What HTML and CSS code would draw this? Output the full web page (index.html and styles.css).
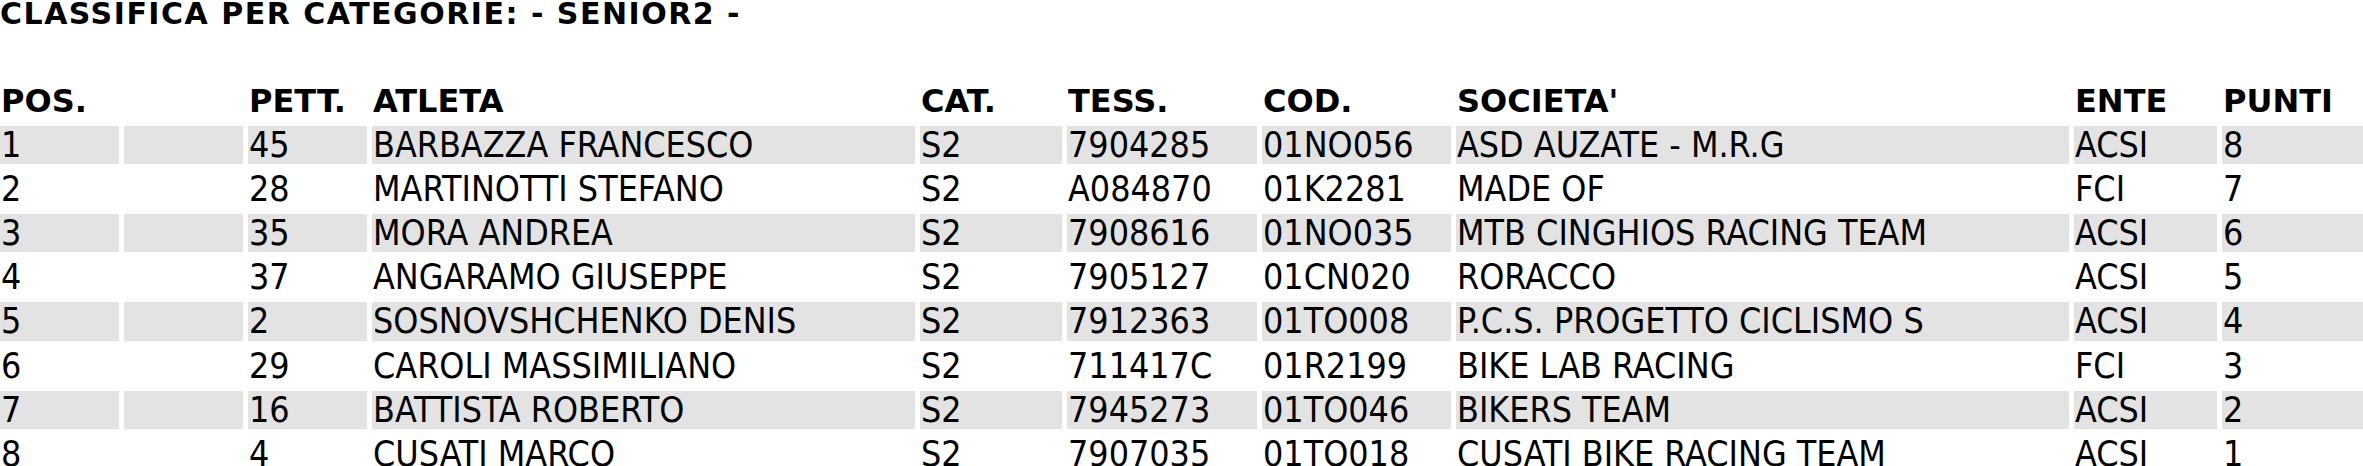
FILE: index.html
```html
<!DOCTYPE html>
<html lang="it">
<head>
<meta charset="utf-8">
<title>Classifica per categorie - SENIOR2</title>
<link rel="stylesheet" href="styles.css">
</head>
<body>
<div class="title">CLASSIFICA PER CATEGORIE: - SENIOR2 -</div>
<div class="table">
  <div class="th">POS.</div><div class="th"></div><div class="th">PETT.</div><div class="th">ATLETA</div><div class="th">CAT.</div><div class="th">TESS.</div><div class="th">COD.</div><div class="th">SOCIETA'</div><div class="th">ENTE</div><div class="th">PUNTI</div>

  <div class="td g">1</div><div class="td g"></div><div class="td g">45</div><div class="td g">BARBAZZA FRANCESCO</div><div class="td g">S2</div><div class="td g">7904285</div><div class="td g">01NO056</div><div class="td g">ASD AUZATE - M.R.G</div><div class="td g">ACSI</div><div class="td g">8</div>

  <div class="td">2</div><div class="td"></div><div class="td">28</div><div class="td">MARTINOTTI STEFANO</div><div class="td">S2</div><div class="td">A084870</div><div class="td">01K2281</div><div class="td">MADE OF</div><div class="td">FCI</div><div class="td">7</div>

  <div class="td g">3</div><div class="td g"></div><div class="td g">35</div><div class="td g">MORA ANDREA</div><div class="td g">S2</div><div class="td g">7908616</div><div class="td g">01NO035</div><div class="td g">MTB CINGHIOS RACING TEAM</div><div class="td g">ACSI</div><div class="td g">6</div>

  <div class="td">4</div><div class="td"></div><div class="td">37</div><div class="td">ANGARAMO GIUSEPPE</div><div class="td">S2</div><div class="td">7905127</div><div class="td">01CN020</div><div class="td">RORACCO</div><div class="td">ACSI</div><div class="td">5</div>

  <div class="td g">5</div><div class="td g"></div><div class="td g">2</div><div class="td g">SOSNOVSHCHENKO DENIS</div><div class="td g">S2</div><div class="td g">7912363</div><div class="td g">01TO008</div><div class="td g">P.C.S. PROGETTO CICLISMO S</div><div class="td g">ACSI</div><div class="td g">4</div>

  <div class="td">6</div><div class="td"></div><div class="td">29</div><div class="td">CAROLI MASSIMILIANO</div><div class="td">S2</div><div class="td">711417C</div><div class="td">01R2199</div><div class="td">BIKE LAB RACING</div><div class="td">FCI</div><div class="td">3</div>

  <div class="td g">7</div><div class="td g"></div><div class="td g">16</div><div class="td g">BATTISTA ROBERTO</div><div class="td g">S2</div><div class="td g">7945273</div><div class="td g">01TO046</div><div class="td g">BIKERS TEAM</div><div class="td g">ACSI</div><div class="td g">2</div>

  <div class="td">8</div><div class="td"></div><div class="td">4</div><div class="td">CUSATI MARCO</div><div class="td">S2</div><div class="td">7907035</div><div class="td">01TO018</div><div class="td">CUSATI BIKE RACING TEAM</div><div class="td">ACSI</div><div class="td">1</div>
</div>
</body>
</html>
```
FILE: styles.css
```css
html, body {
  margin: 0;
  padding: 0;
  background: #ffffff;
  color: #000000;
  font-family: "DejaVu Sans", "Liberation Sans", sans-serif;
}

.title {
  font-size: 30px;
  font-weight: bold;
  letter-spacing: 1.5px;
  line-height: 28px;
  height: 28px;
  margin-bottom: 53.5px;
  white-space: nowrap;
}

.table {
  display: grid;
  grid-template-columns: 118.5px 118.5px 118.5px 542.5px 141.5px 189.5px 188.5px 612.5px 142.5px 1fr;
  grid-auto-rows: 38.2px;
  column-gap: 5.5px;
  row-gap: 6px;
}

.th, .td {
  padding-left: 1px;
  white-space: nowrap;
}

.th {
  font-size: 32px;
  font-weight: bold;
  line-height: 38px;
}

.td {
  font-family: "DejaVu Sans Condensed", "DejaVu Sans", sans-serif;
  font-stretch: condensed;
  font-size: 35.5px;
  line-height: 38.2px;
}

.g {
  background: #e3e3e3;
}
```
